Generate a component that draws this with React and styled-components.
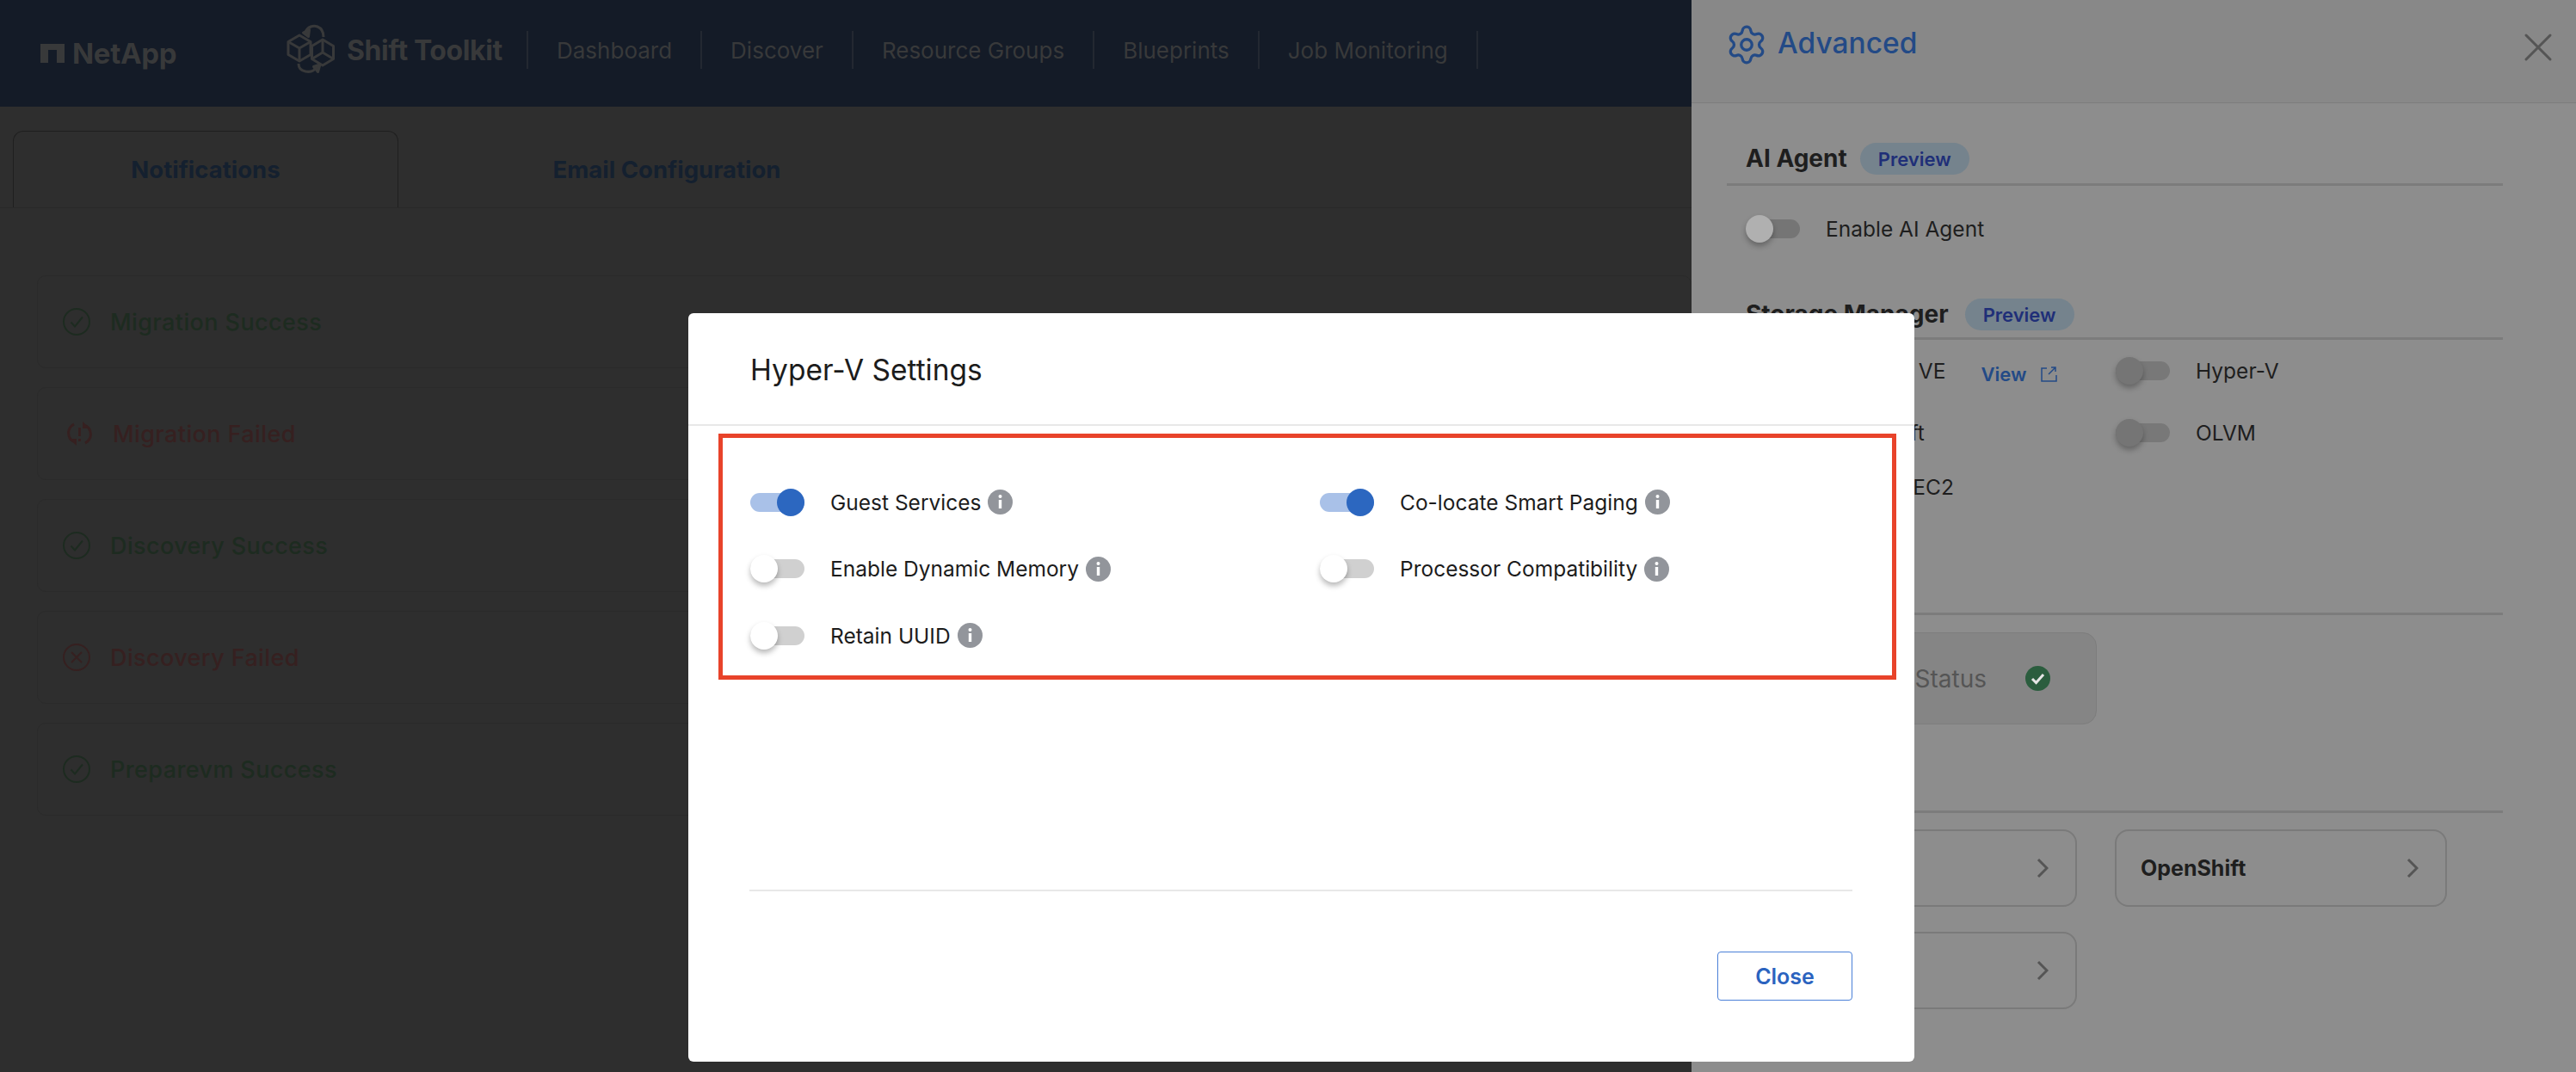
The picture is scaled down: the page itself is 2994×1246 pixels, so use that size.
import React from "react";
import styled, { createGlobalStyle } from "styled-components";
import { Settings, X } from "lucide-react";

const GlobalStyle = createGlobalStyle`
  html, body {
    margin: 0;
    padding: 0;
    height: 100%;
    overflow: hidden;
    background: #2e2e2e;
    font-family: "Inter", "Liberation Sans", sans-serif;
  }
  * {
    box-sizing: border-box;
  }
`;

const Page = styled.div`
  display: flex;
  width: 2994px;
  height: 1246px;
`;

const Main = styled.div`
  width: 1966px;
  flex-shrink: 0;
  background: #2e2e2e;
`;

const Header = styled.header`
  display: flex;
  align-items: center;
  height: 124px;
  background: #141b27;
  color: #38393a;
`;

const Brand = styled.div`
  display: flex;
  align-items: center;
  gap: 9px;
  width: 325px;
  padding-left: 47px;
  font-size: 33px;
  font-weight: 700;
  letter-spacing: -0.3px;
`;

const AppName = styled.div`
  display: flex;
  align-items: center;
  gap: 3px;
  width: 287px;
  margin-top: -8px;
  font-size: 32px;
  font-weight: 700;
  letter-spacing: -0.4px;
`;

const Nav = styled.nav`
  display: flex;
  margin-top: -8px;
  border-left: 2px solid #232831;
`;

const NavItem = styled.div`
  display: flex;
  align-items: center;
  height: 44px;
  padding: 0 33px;
  font-size: 26px;
  border-right: 2px solid #232831;
`;

const TabBar = styled.div`
  display: flex;
  height: 90px;
  margin-top: 28px;
  padding-left: 15px;
  border-bottom: 1px solid #292929;
`;

const Tab = styled.div`
  display: flex;
  align-items: center;
  justify-content: center;
  width: ${(props) => props.$width}px;
  font-size: 27.5px;
  font-weight: 700;
  color: #14202f;
  border: 1px solid ${(props) => (props.$active ? "#1f1f1f" : "transparent")};
  border-bottom: none;
  border-radius: 12px 12px 0 0;
`;

const NotificationList = styled.div`
  display: flex;
  flex-direction: column;
  gap: 22px;
  margin-top: 78px;
  padding-left: 43px;
`;

const NotificationRow = styled.div`
  display: flex;
  align-items: center;
  gap: 23px;
  height: 108px;
  padding-left: ${(props) => props.$inset}px;
  border: 1px solid #2a2a2a;
  border-radius: 10px;
  font-size: 27px;
  font-weight: 500;
  letter-spacing: 0.4px;
  color: ${(props) => (props.$failed ? "#362020" : "#1d2b20")};
`;

const Drawer = styled.aside`
  flex: 1;
  background: #8d8d8d;
`;

const DrawerHeader = styled.div`
  display: flex;
  align-items: flex-start;
  height: 120px;
  padding: 27px 16px 0 39px;
  background: #888888;
  border-bottom: 1px solid #7d7d7d;
`;

const DrawerTitle = styled.h2`
  margin: -2px 0 0 11px;
  font-size: 33.5px;
  line-height: 50px;
  font-weight: 500;
  color: #234a86;
`;

const DrawerClose = styled.div`
  display: flex;
  margin-left: auto;
  color: #555555;
`;

const DrawerBody = styled.div`
  padding: 0 85px 0 41px;
`;

const SectionHead = styled.div`
  display: flex;
  align-items: flex-start;
  gap: ${(props) => props.$gap || 15}px;
  height: ${(props) => props.$height}px;
  margin-top: ${(props) => props.$top}px;
  padding-left: 22px;
  border-bottom: 3px solid #7c7c7c;
`;

const SectionTitle = styled.div`
  font-size: 28px;
  line-height: 37px;
  font-weight: 700;
  color: #1e1e1e;
`;

const Badge = styled.span`
  display: inline-flex;
  align-items: center;
  justify-content: center;
  width: 127px;
  height: 37px;
  border-radius: 19px;
  background: #75838d;
  color: #1f2f78;
  font-size: 22px;
  font-weight: 600;
`;

const SettingRow = styled.div`
  display: flex;
  align-items: center;
  gap: 30px;
  font-size: 24.5px;
  color: ${(props) => props.$color || "#1e1e1e"};
`;

const AgentRow = styled(SettingRow)`
  height: 100px;
  padding-left: 22px;
`;

const StorageGrid = styled.div`
  display: grid;
  grid-template-columns: 430px 1fr;
  grid-template-rows: 72px 72px 54px;
  align-items: center;
  padding-left: 22px;
`;

const ViewLink = styled.span`
  display: flex;
  align-items: center;
  gap: 17px;
  margin: 8px 0 0 11px;
  font-size: 22px;
  font-weight: 600;
  color: #234a86;
`;

const StatusCard = styled.div`
  display: flex;
  align-items: center;
  justify-content: flex-end;
  gap: 45px;
  width: 409px;
  height: 107px;
  margin: 20px 0 0 21px;
  padding-right: 53px;
  background: #858585;
  border: 1px solid #7d7d7d;
  border-radius: 16px;
  font-size: 28px;
  color: #555555;
`;

const PlatformGrid = styled.div`
  display: grid;
  grid-template-columns: 386px 386px;
  gap: 29px 44px;
  margin: 19px 0 0 21px;
`;

const PlatformCard = styled.div`
  display: flex;
  align-items: center;
  justify-content: space-between;
  height: 90px;
  padding: 0 31px 0 28px;
  border: 2px solid #7a7a7a;
  border-radius: 16px;
  font-size: 25px;
  font-weight: 700;
  color: #1e1e1e;
`;

const Toggle = styled.span`
  position: relative;
  display: inline-block;
  flex-shrink: 0;
  width: 63px;
  height: 32px;

  &::before {
    content: "";
    position: absolute;
    left: 0;
    right: 0;
    top: 5px;
    height: 22px;
    border-radius: 11px;
    background: ${(props) => props.$track};
  }

  &::after {
    content: "";
    position: absolute;
    top: 0;
    left: ${(props) => (props.$on ? "31px" : "0")};
    width: 32px;
    height: 32px;
    border-radius: 50%;
    background: ${(props) => props.$thumb};
    box-shadow: ${(props) => (props.$on ? "none" : "0 4px 6px rgba(0, 0, 0, 0.28)")};
  }
`;

const ModalLayer = styled.div`
  position: fixed;
  inset: 0;
  display: flex;
  padding: 364px 0 0 800px;
`;

const Modal = styled.div`
  display: flex;
  flex-direction: column;
  width: 1425px;
  height: 870px;
  background: #ffffff;
  border-radius: 6px;
`;

const ModalHeader = styled.div`
  display: flex;
  align-items: center;
  height: 131px;
  padding: 2px 0 0 72px;
  border-bottom: 2px solid #e8e8e8;
  font-size: 33.5px;
  color: #1c1c1c;
`;

const HighlightBox = styled.div`
  height: 286px;
  margin: 9px 21px 0 35px;
  padding: 36px 0 0 32px;
  border: 5px solid #e8432a;
`;

const OptionGrid = styled.div`
  display: grid;
  grid-template-columns: 662px 1fr;
  grid-auto-rows: 77.5px;
  align-items: center;
`;

const LabelText = styled.span`
  display: flex;
  align-items: center;
  gap: 8px;
`;

const ModalFooter = styled.div`
  display: flex;
  justify-content: flex-end;
  margin: auto 72px 71px 71px;
  padding-top: 70px;
  border-top: 2px solid #e8e8e8;
`;

const CloseButton = styled.button`
  width: 157px;
  height: 57px;
  padding: 0;
  background: #ffffff;
  border: 1.5px solid #4a80d8;
  border-radius: 4px;
  font-family: inherit;
  font-size: 25px;
  font-weight: 600;
  color: #2b63bf;
`;

const NetAppMark = () => (
  <svg width="28" height="22" viewBox="0 0 28 22">
    <path d="M0 0h28v22h-9V7h-10v15H0z" fill="currentColor" />
  </svg>
);

const ToolkitLogo = () => (
  <svg width="75" height="70" viewBox="0 0 75 70" fill="none" stroke="currentColor" strokeWidth="3" strokeLinejoin="round">
    <path d="M23 18l13 7.5v15L23 48l-13-7.5v-15z" />
    <path d="M10 25.5L23 33l13-7.5M23 33v15" />
    <path d="M50 23l12.5 7.5v15L50 53l-12.500-7.500v-15z" />
    <path d="M50 23v15l-12.500 7.500M50 38l12.500 7.500" />
    <path d="M30 14c3-6 9-8 14-6 5 2 7 7 7 12" />
    <path d="M27.500 15l7-3.500-1 8z" fill="currentColor" />
    <path d="M22 51c0 5 3 8 8 9 5 1 10 0 13-5" />
    <path d="M47 52l-7.500 2.500 5 6z" fill="currentColor" />
  </svg>
);

const CheckCircle = () => (
  <svg width="32" height="32" viewBox="0 0 32 32" fill="none" stroke="#1d2b20" strokeWidth="2">
    <circle cx="16" cy="16" r="15" />
    <path d="M9.500 16.500l4.500 5 9-11" />
  </svg>
);

const FailCircle = () => (
  <svg width="32" height="32" viewBox="0 0 32 32" fill="none" stroke="#362020" strokeWidth="2">
    <circle cx="16" cy="16" r="15" />
    <path d="M10 10l12 12M22 10L10 22" />
  </svg>
);

const RetryFail = () => (
  <svg width="31" height="28" viewBox="0 0 31 28" fill="none" stroke="#362020" strokeWidth="3">
    <path d="M9 3C3 6 1 13 4 19c1 2 2 3 4 4" />
    <path d="M22 25c6-3 8-10 5-16-1-2-2-3-4-4" />
    <path d="M3 20h9v8z" fill="#362020" stroke="none" />
    <path d="M28 8h-9V0z" fill="#362020" stroke="none" />
    <path d="M15.500 7v10M15.500 20v3" />
  </svg>
);

const ExternalIcon = () => (
  <svg width="19" height="18" viewBox="0 0 19 18" fill="none" stroke="#234a86" strokeWidth="1.500">
    <path d="M7 2H1v15h17v-7" />
    <path d="M9 9l8-8M12 1h5v5" />
  </svg>
);

const InfoIcon = () => (
  <svg width="29" height="29" viewBox="0 0 29 29">
    <circle cx="14.500" cy="14.500" r="14.500" fill="#92959b" />
    <rect x="12.800" y="12" width="3.400" height="10" fill="#ffffff" />
    <circle cx="14.500" cy="8" r="2" fill="#ffffff" />
  </svg>
);

const StatusOk = () => (
  <svg width="29" height="29" viewBox="0 0 29 29">
    <circle cx="14.500" cy="14.500" r="14.500" fill="#2b5d3e" />
    <path d="M8 15l4.500 4.500L21 10" fill="none" stroke="#e6e6e6" strokeWidth="3" />
  </svg>
);

const Chevron = () => (
  <svg width="14" height="24" viewBox="0 0 14 24" fill="none" stroke="#555555" strokeWidth="3">
    <path d="M2 2l10 10L2 22" />
  </svg>
);

const navItems = ["Dashboard", "Discover", "Resource Groups", "Blueprints", "Job Monitoring"];

const notifications = [
  { label: "Migration Success", icon: <CheckCircle />, inset: 29 },
  { label: "Migration Failed", icon: <RetryFail />, inset: 33, failed: true },
  { label: "Discovery Success", icon: <CheckCircle />, inset: 29 },
  { label: "Discovery Failed", icon: <FailCircle />, inset: 29, failed: true },
  { label: "Preparevm Success", icon: <CheckCircle />, inset: 29 },
];

const hyperVOptions = [
  { label: "Guest Services", on: true },
  { label: "Co-locate Smart Paging", on: true },
  { label: "Enable Dynamic Memory" },
  { label: "Processor Compatibility" },
  { label: "Retain UUID" },
];

const DimToggle = () => <Toggle $track="#787878" $thumb="#757575" />;

export default function App() {
  return (
    <>
      <GlobalStyle />
      <Page>
        <Main>
          <Header>
            <Brand>
              <NetAppMark />
              NetApp
            </Brand>
            <AppName>
              <ToolkitLogo />
              Shift Toolkit
            </AppName>
            <Nav>
              {navItems.map((item) => (
                <NavItem key={item}>{item}</NavItem>
              ))}
            </Nav>
          </Header>
          <TabBar>
            <Tab $active $width={448}>Notifications</Tab>
            <Tab $width={624}>Email Configuration</Tab>
          </TabBar>
          <NotificationList>
            {notifications.map((item) => (
              <NotificationRow key={item.label} $inset={item.inset} $failed={item.failed}>
                {item.icon}
                {item.label}
              </NotificationRow>
            ))}
          </NotificationList>
        </Main>

        <Drawer>
          <DrawerHeader>
            <Settings size={50} strokeWidth={1.6} color="#234a86" />
            <DrawerTitle>Advanced</DrawerTitle>
            <DrawerClose>
              <X size={56} strokeWidth={1.3} />
            </DrawerClose>
          </DrawerHeader>
          <DrawerBody>
            <SectionHead $top={46} $height={50}>
              <SectionTitle>AI Agent</SectionTitle>
              <Badge>Preview</Badge>
            </SectionHead>
            <AgentRow>
              <Toggle $track="#757575" $thumb="#b0b0b0" />
              Enable AI Agent
            </AgentRow>
            <SectionHead $top={31} $height={48} $gap={19}>
              <SectionTitle>Storage Manager</SectionTitle>
              <Badge>Preview</Badge>
            </SectionHead>
            <StorageGrid>
              <SettingRow>
                <DimToggle />
                Proxmox VE
                <ViewLink>
                  View
                  <ExternalIcon />
                </ViewLink>
              </SettingRow>
              <SettingRow>
                <DimToggle />
                Hyper-V
              </SettingRow>
              <SettingRow>
                <DimToggle />
                OpenShift
              </SettingRow>
              <SettingRow>
                <DimToggle />
                OLVM
              </SettingRow>
              <SettingRow>
                <DimToggle />
                Amazon EC2
              </SettingRow>
            </StorageGrid>
            <SectionHead $top={70} $height={52} />
            <StatusCard>
              Status
              <StatusOk />
            </StatusCard>
            <SectionHead $top={50} $height={53} />
            <PlatformGrid>
              <PlatformCard>
                <span />
                <Chevron />
              </PlatformCard>
              <PlatformCard>
                OpenShift
                <Chevron />
              </PlatformCard>
              <PlatformCard>
                <span />
                <Chevron />
              </PlatformCard>
            </PlatformGrid>
          </DrawerBody>
        </Drawer>
      </Page>

      <ModalLayer>
        <Modal>
          <ModalHeader>Hyper-V Settings</ModalHeader>
          <HighlightBox>
            <OptionGrid>
              {hyperVOptions.map((option) => (
                <SettingRow key={option.label} $color="#1c1c1c">
                  <Toggle
                    $on={option.on}
                    $track={option.on ? "#a9c1e8" : "#d0d0d0"}
                    $thumb={option.on ? "#2c67c0" : "#ffffff"}
                  />
                  <LabelText>
                    {option.label}
                    <InfoIcon />
                  </LabelText>
                </SettingRow>
              ))}
            </OptionGrid>
          </HighlightBox>
          <ModalFooter>
            <CloseButton>Close</CloseButton>
          </ModalFooter>
        </Modal>
      </ModalLayer>
    </>
  );
}
